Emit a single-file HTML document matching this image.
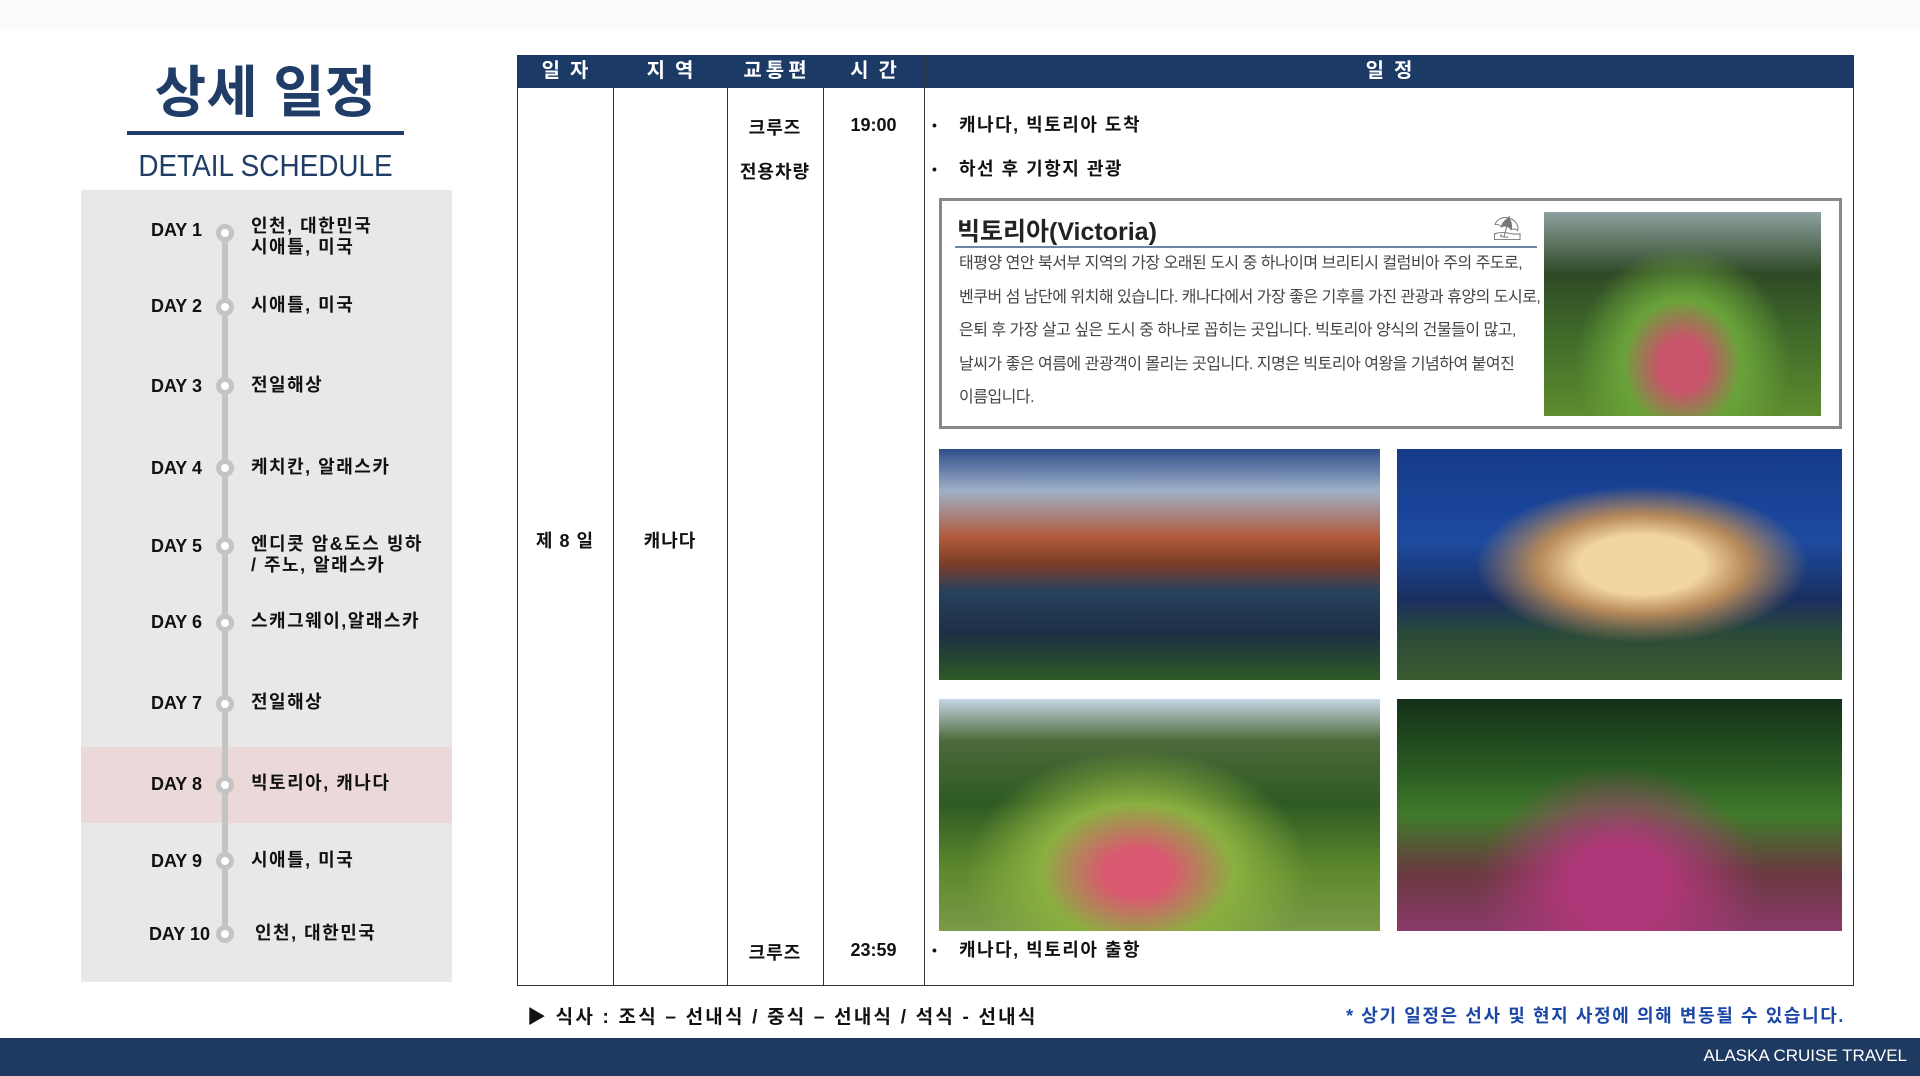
<!DOCTYPE html>
<html><head><meta charset="utf-8"><style>
*{margin:0;padding:0;box-sizing:border-box}
body{width:1920px;height:1076px;position:relative;background:#fff;font-family:"Liberation Sans","Noto Sans CJK KR",sans-serif;overflow:hidden;color:#111}
.a{position:absolute}
.day{position:absolute;left:120px;width:82px;text-align:right;font-weight:bold;font-size:18px;color:#111}
.pl{position:absolute;left:251px;font-weight:bold;font-size:18px;line-height:21px;color:#111;letter-spacing:1.5px}
.dot{position:absolute;left:216px;width:18px;height:18px;border-radius:50%;border:5px solid #c4c4c4;background:#fff}
.th{position:absolute;top:55px;height:33px;color:#fff;font-weight:bold;font-size:20px;text-align:center;line-height:33px;letter-spacing:10px;text-indent:10px}
.vl{position:absolute;top:55px;height:931px;width:1px;background:#333}
.c{position:absolute;font-weight:bold;font-size:18px;text-align:center;letter-spacing:1px}
.b{position:absolute;left:932px;font-weight:bold;font-size:18px;line-height:22px;letter-spacing:1.5px}
.b:before{content:"•";position:absolute;left:0;top:0;font-size:14px}
.b span{margin-left:27px}
.p{position:absolute;left:959px;font-size:16px;color:#444;line-height:33.5px;letter-spacing:-0.5px}
</style></head><body>
<div class="a" style="left:0;top:0;width:1920px;height:30px;background:#fbfbfc"></div>
<div class="a" style="left:127px;top:48px;width:277px;text-align:center;font-size:56px;font-weight:bold;color:#1f3d66">상세 일정</div>
<div class="a" style="left:127px;top:131px;width:277px;height:4px;background:#1f3d66"></div>
<div class="a" style="left:107px;top:148px;width:317px;text-align:center;font-size:31px;color:#1f3d66;white-space:nowrap;transform:scaleX(0.9)">DETAIL SCHEDULE</div>

<div class="a" style="left:81px;top:190px;width:371px;height:792px;background:#e8e8e8"></div>
<div class="a" style="left:81px;top:747px;width:371px;height:76px;background:#ebd9d9"></div>
<div class="a" style="left:222px;top:233px;width:6px;height:701px;background:#c4c4c4"></div>

<div class="day" style="top:220px">DAY 1</div><div class="dot" style="top:224px"></div><div class="pl" style="top:216px">인천, 대한민국<br>시애틀, 미국</div>
<div class="day" style="top:296px">DAY 2</div><div class="dot" style="top:298px"></div><div class="pl" style="top:295px">시애틀, 미국</div>
<div class="day" style="top:376px">DAY 3</div><div class="dot" style="top:377px"></div><div class="pl" style="top:375px">전일해상</div>
<div class="day" style="top:458px">DAY 4</div><div class="dot" style="top:459px"></div><div class="pl" style="top:457px">케치칸, 알래스카</div>
<div class="day" style="top:536px">DAY 5</div><div class="dot" style="top:537px"></div><div class="pl" style="top:534px">엔디콧 암&amp;도스 빙하<br>/ 주노, 알래스카</div>
<div class="day" style="top:612px">DAY 6</div><div class="dot" style="top:614px"></div><div class="pl" style="top:611px">스캐그웨이,알래스카</div>
<div class="day" style="top:693px">DAY 7</div><div class="dot" style="top:695px"></div><div class="pl" style="top:692px">전일해상</div>
<div class="day" style="top:774px">DAY 8</div><div class="dot" style="top:776px"></div><div class="pl" style="top:773px">빅토리아, 캐나다</div>
<div class="day" style="top:851px">DAY 9</div><div class="dot" style="top:852px"></div><div class="pl" style="top:850px">시애틀, 미국</div>
<div class="day" style="top:924px;left:118px;width:92px">DAY 10</div><div class="dot" style="top:925px"></div><div class="pl" style="top:923px;left:255px">인천, 대한민국</div>

<div class="a" style="left:517px;top:55px;width:1337px;height:931px;border:1px solid #333"></div>
<div class="a" style="left:517px;top:55px;width:1337px;height:33px;background:#1b3a66"></div>
<div class="th" style="left:517px;width:96px">일자</div>
<div class="th" style="left:613px;width:114px">지역</div>
<div class="th" style="left:727px;width:96px;letter-spacing:4px;text-indent:4px">교통편</div>
<div class="th" style="left:823px;width:101px">시간</div>
<div class="th" style="left:924px;width:930px">일정</div>
<div class="vl" style="left:613px"></div><div class="vl" style="left:727px"></div><div class="vl" style="left:823px"></div><div class="vl" style="left:924px"></div>

<div class="c" style="left:727px;width:96px;top:114px">크루즈</div>
<div class="c" style="left:823px;width:101px;top:115px;letter-spacing:0">19:00</div>
<div class="b" style="top:114px"><span>캐나다, 빅토리아 도착</span></div>
<div class="c" style="left:727px;width:96px;top:158px">전용차량</div>
<div class="b" style="top:158px"><span>하선 후 기항지 관광</span></div>
<div class="c" style="left:517px;width:96px;top:527px">제 8 일</div>
<div class="c" style="left:613px;width:114px;top:527px">캐나다</div>
<div class="c" style="left:727px;width:96px;top:939px">크루즈</div>
<div class="c" style="left:823px;width:101px;top:940px;letter-spacing:0">23:59</div>
<div class="b" style="top:939px"><span>캐나다, 빅토리아 출항</span></div>

<div class="a" style="left:939px;top:198px;width:903px;height:231px;border:3px solid #888"></div>
<div class="a" style="left:957px;top:212px;font-size:25px;font-weight:bold;color:#222">빅토리아(Victoria)</div>
<div class="a" style="left:955px;top:246px;width:582px;height:2px;background:#6a88a6"></div>
<div class="a" style="left:1492px;top:214px;font-size:24px;color:#777">⛱</div>
<div class="p" style="top:247px">태평양 연안 북서부 지역의 가장 오래된 도시 중 하나이며 브리티시 컬럼비아 주의 주도로,<br>벤쿠버 섬 남단에 위치해 있습니다. 캐나다에서 가장 좋은 기후를 가진 관광과 휴양의 도시로,<br>은퇴 후 가장 살고 싶은 도시 중 하나로 꼽히는 곳입니다. 빅토리아 양식의 건물들이 많고,<br>날씨가 좋은 여름에 관광객이 몰리는 곳입니다. 지명은 빅토리아 여왕을 기념하여 붙여진<br>이름입니다.</div>
<div class="a" style="left:1544px;top:212px;width:277px;height:204px;background:radial-gradient(ellipse at 50% 75%,#c9536a 0 12%,#6aa33a 30%,transparent 55%),linear-gradient(180deg,#8ea0a0 0%,#2f4a26 30%,#3f6a2a 60%,#5e8c2e 100%)"></div>

<div class="a" style="left:939px;top:449px;width:441px;height:231px;background:linear-gradient(180deg,#2d4f8a 0%,#9fb0c8 18%,#b05a3a 38%,#7a3d28 50%,#27415e 62%,#1d2f45 80%,#2c5a24 100%)"></div>
<div class="a" style="left:1397px;top:449px;width:445px;height:231px;background:radial-gradient(ellipse at 55% 50%,#f2d6a0 0 18%,#b78a5a 30%,transparent 48%),linear-gradient(180deg,#163a8a 0%,#1d4aa0 40%,#1a2f60 65%,#2a4a3a 80%,#3a5a30 100%)"></div>
<div class="a" style="left:939px;top:699px;width:441px;height:232px;background:radial-gradient(ellipse at 45% 75%,#d95a70 0 10%,#8ab040 28%,transparent 50%),linear-gradient(180deg,#c6d6e6 0%,#4c6a3a 18%,#2e5a22 45%,#5f8a2e 75%,#7a9a48 100%)"></div>
<div class="a" style="left:1397px;top:699px;width:445px;height:232px;background:radial-gradient(ellipse at 50% 80%,#b0387a 0 15%,transparent 45%),linear-gradient(180deg,#123018 0%,#2a5a22 30%,#3f7a2a 50%,#6a3a40 75%,#8a3a6a 100%)"></div>

<div class="a" style="left:527px;top:1002px;font-size:19px;font-weight:bold;letter-spacing:2.2px">▶ 식사 : 조식 – 선내식 / 중식 – 선내식 / 석식 - 선내식</div>
<div class="a" style="right:75px;top:1002px;font-size:18px;font-weight:bold;color:#1b47a6;letter-spacing:1.6px">* 상기 일정은 선사 및 현지 사정에 의해 변동될 수 있습니다.</div>
<div class="a" style="left:0;top:1038px;width:1920px;height:38px;background:#1f3a60"></div>
<div class="a" style="right:13px;top:1046px;font-size:17px;color:#fff">ALASKA CRUISE TRAVEL</div>
</body></html>
